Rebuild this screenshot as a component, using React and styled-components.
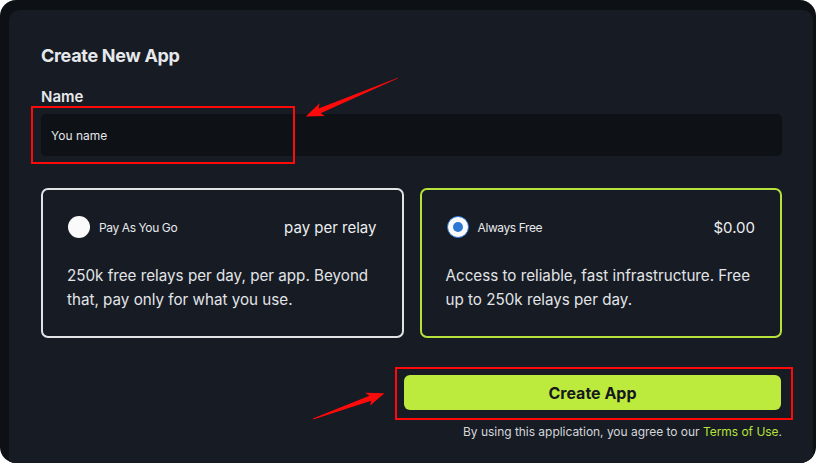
import React from 'react'
import styled, { createGlobalStyle } from 'styled-components'

const GlobalStyle = createGlobalStyle`
  body {
    margin: 0;
    background: #ffffff;
    font-family: Inter, "Liberation Sans", sans-serif;
  }
`

const Page = styled.div`
  position: relative;
  width: 819px;
  height: 465px;
`

const Frame = styled.div`
  width: 816px;
  height: 463px;
  box-sizing: border-box;
  padding: 10px 3px 0 9px;
  background: #0d1014;
  border-radius: 16px;
  overflow: hidden;
  display: flex;
`

const Panel = styled.div`
  flex: 1;
  background: #161b24;
  border-radius: 10px 10px 0 0;
  padding: 34px 31px 0 32px;
  display: flex;
  flex-direction: column;
  color: #e6e8eb;
`

const Title = styled.h1`
  margin: 0;
  font-size: 18px;
  line-height: 24px;
  font-weight: 700;
  letter-spacing: -0.3px;
`

const Label = styled.label`
  margin-top: 19px;
  font-size: 15px;
  line-height: 20px;
  font-weight: 600;
`

const Input = styled.div`
  margin-top: 7px;
  height: 42px;
  border-radius: 5px;
  background: #0e1116;
  display: flex;
  align-items: center;
  padding-left: 10px;
  font-size: 12px;
  color: #e4e6e8;
`

const Plans = styled.div`
  margin-top: 32px;
  display: grid;
  grid-template-columns: 1fr 1fr;
  gap: 16px;
`

const Card = styled.div`
  height: 150px;
  box-sizing: border-box;
  border: 2px solid ${p => (p.selected ? '#b7e23b' : '#e2e3e5')};
  border-radius: 7px;
  padding: 25px 25px 0 24px;
`

const CardHead = styled.div`
  display: flex;
  align-items: center;
  height: 24px;
`

const Radio = styled.span`
  width: 22px;
  height: 22px;
  box-sizing: border-box;
  border-radius: 50%;
  background: #fafafa;
  border: ${p => (p.checked ? '1.5px solid #2b78d6' : 'none')};
  display: flex;
  align-items: center;
  justify-content: center;
  margin-left: 1px;

  &::after {
    content: '';
    display: ${p => (p.checked ? 'block' : 'none')};
    width: 10px;
    height: 10px;
    border-radius: 50%;
    background: #2b78d6;
  }
`

const PlanName = styled.span`
  margin-left: 9px;
  font-size: 12px;
  letter-spacing: -0.4px;
  color: #e8e9eb;
`

const Price = styled.span`
  margin-left: auto;
  font-size: 15px;
  color: #eceef0;
`

const Desc = styled.p`
  margin: 25px 0 0;
  font-size: 15.2px;
  line-height: 24px;
  color: #e2e4e7;
`

const Footer = styled.div`
  margin-top: 37px;
  display: flex;
  flex-direction: column;
  align-items: flex-end;
`

const Button = styled.button`
  width: 377px;
  height: 35px;
  margin-right: 1px;
  border: none;
  border-radius: 6px;
  background: #bcea3d;
  color: #15181d;
  font-family: Inter, "Liberation Sans", sans-serif;
  font-size: 16px;
  font-weight: 700;
`

const Terms = styled.div`
  margin-top: 14px;
  font-size: 12px;
  line-height: 16px;
  letter-spacing: -0.03px;
  color: #d4d7da;

  a {
    color: #b7e23b;
    text-decoration: none;
  }
`

const Marks = styled.svg`
  position: absolute;
  left: 0;
  top: 0;
  pointer-events: none;
`

const Arrow = ({ x, y, angle, length }) => (
  <g transform={`translate(${x} ${y}) rotate(${angle})`}>
    <polygon
      fill='#ff0a0a'
      points={`0,-0.4 ${length - 15},-2.6 ${length - 18},-7 ${length},0 ${length - 18},7 ${length - 15},2.6 0,0.4`}
    />
  </g>
)

export default function App () {
  return (
    <Page>
      <GlobalStyle />
      <Frame>
        <Panel>
          <Title>Create New App</Title>
          <Label>Name</Label>
          <Input>You name</Input>
          <Plans>
            <Card>
              <CardHead>
                <Radio />
                <PlanName>Pay As You Go</PlanName>
                <Price>pay per relay</Price>
              </CardHead>
              <Desc>250k free relays per day, per app. Beyond that, pay only for what you use.</Desc>
            </Card>
            <Card selected>
              <CardHead>
                <Radio checked />
                <PlanName>Always Free</PlanName>
                <Price>$0.00</Price>
              </CardHead>
              <Desc>Access to reliable, fast infrastructure. Free up to 250k relays per day.</Desc>
            </Card>
          </Plans>
          <Footer>
            <Button>Create App</Button>
            <Terms>By using this application, you agree to our <a href='#'>Terms of Use</a>.</Terms>
          </Footer>
        </Panel>
      </Frame>
      <Marks width='819' height='465'>
        <rect x='32' y='107' width='262' height='56' fill='none' stroke='#ff0a0a' strokeWidth='2' />
        <rect x='396' y='368' width='396' height='51' fill='none' stroke='#ff0a0a' strokeWidth='2' />
        <Arrow x={398} y={78} angle={157.3} length={100} />
        <Arrow x={313} y={419} angle={-19.9} length={76} />
      </Marks>
    </Page>
  )
}
